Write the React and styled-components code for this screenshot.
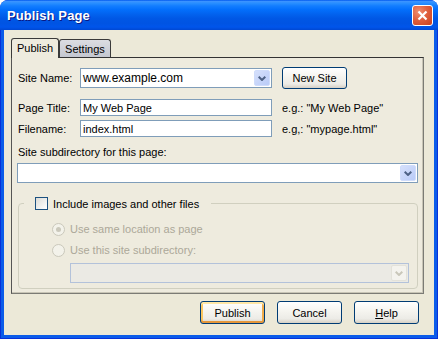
import React from "react";
import styled, { createGlobalStyle, css } from "styled-components";

const GlobalStyle = createGlobalStyle`
  html, body { margin: 0; padding: 0; background: #ffffff; }
  body { font-family: "Liberation Sans", Arial, sans-serif; font-size: 11px; color: #000; }
  * { box-sizing: border-box; }
`;

const Window = styled.div`
  width: 438px;
  height: 339px;
  display: flex;
  flex-direction: column;
  border-radius: 8px 8px 0 0;
  overflow: hidden;
  background: #0831d9;
`;

const TitleBar = styled.div`
  height: 30px;
  flex: none;
  display: flex;
  align-items: center;
  justify-content: space-between;
  padding: 0 5px 0 7px;
  background: linear-gradient(
    to bottom,
    #0058ee 0%,
    #3a93ff 5%,
    #288eff 11%,
    #127dff 20%,
    #036ffc 32%,
    #0262ee 48%,
    #0057e5 62%,
    #0054e3 78%,
    #0055eb 90%,
    #0048d3 100%
  );
`;

const Title = styled.span`
  color: #fff;
  font: bold 13px "Liberation Sans", Arial, sans-serif;
  text-shadow: 1px 1px 0 #0a1883;
  letter-spacing: 0.1px;
`;

const CloseButton = styled.div`
  width: 21px;
  height: 21px;
  border: 1px solid #fff;
  border-radius: 3px;
  display: flex;
  align-items: center;
  justify-content: center;
  background: radial-gradient(circle at 30% 30%, #f08e70 0%, #e0603e 45%, #c9401d 100%);
`;

const Frame = styled.div`
  flex: 1;
  display: flex;
  padding: 0 1px 1px 1px;
  background: #0831d9;
`;

const Client = styled.div`
  flex: 1;
  display: flex;
  flex-direction: column;
  background: #ece9d8;
  border: 3px solid #0b5ce9;
  border-top: none;
  padding: 8px 10px 11px 7px;
`;

const TabStrip = styled.div`
  display: flex;
  align-items: flex-end;
  height: 20px;
  margin-bottom: -1px;
  z-index: 1;
  flex: none;
`;

const Tab = styled.div`
  display: flex;
  align-items: center;
  padding: 0 5px;
  border: 1px solid #3a3a3a;
  border-bottom: none;
  border-radius: 3px 3px 0 0;
  ${(p) =>
    p.$active
      ? css`
          height: 20px;
          background: #eeebde;
          padding-bottom: 2px;
        `
      : css`
          height: 18px;
          margin-bottom: 1px;
          background: linear-gradient(to bottom, #dcdde2 0%, #c4c7d0 100%);
        `}
`;

const Panel = styled.div`
  flex: 1;
  display: flex;
  flex-direction: column;
  background: #eeebde;
  border: 1px solid #7b7b75;
  border-top-color: #333;
  border-left-color: #555;
  box-shadow: inset -1px -1px 0 #c8c5b6;
  padding: 9px 5px 0 5px;
`;

const FieldRow = styled.div`
  display: flex;
  align-items: center;
  height: ${(p) => p.$h}px;
  margin-top: ${(p) => p.$mt || 0}px;
`;

const Label = styled.span`
  width: 63px;
  padding-left: 1px;
  flex: none;
  white-space: nowrap;
`;

const Hint = styled.span`
  margin-left: 10px;
  white-space: nowrap;
`;

const Combo = styled.div`
  width: ${(p) => (p.$w ? `${p.$w}px` : "auto")};
  height: 20px;
  flex: none;
  display: flex;
  align-items: center;
  justify-content: space-between;
  border: 1px solid ${(p) => (p.$disabled ? "#b3c2da" : "#7f9db9")};
  background: ${(p) => (p.$disabled ? "#ebeae4" : "#fff")};
  padding-left: 2px;
  font-size: 12px;
  margin-top: ${(p) => p.$mt || 0}px;
  margin-left: ${(p) => p.$ml || 0}px;
`;

const DropButton = styled.span`
  width: 16px;
  height: 16px;
  margin: 1px;
  display: flex;
  align-items: center;
  justify-content: center;
  border-radius: 2px;
  ${(p) =>
    p.$disabled
      ? css`
          background: #f4f3ee;
          border: 1px solid #e3e2da;
        `
      : css`
          background: linear-gradient(135deg, #d6e0fb 0%, #b9cbf8 100%);
          border: 1px solid #cfdcfb;
        `}
`;

const TextInput = styled.div`
  width: 192px;
  height: 17px;
  flex: none;
  display: flex;
  align-items: center;
  border: 1px solid #7f9db9;
  background: #fff;
  padding-left: 2px;
`;

const Button = styled.button`
  width: 65px;
  height: ${(p) => p.$h || 23}px;
  flex: none;
  margin-left: ${(p) => p.$ml || 0}px;
  border: 1px solid #003c74;
  border-radius: 3px;
  padding: 0;
  color: #000;
  font: 11px "Liberation Sans", Arial, sans-serif;
  background: linear-gradient(to bottom, #ffffff 0%, #f5f4ef 45%, #ecebe6 80%, #d6d0c5 100%);
  ${(p) =>
    p.$default &&
    css`
      box-shadow: inset 0 2px 0 #ffe7a6, inset 0 -2px 0 #e5973c, inset 2px 0 0 #fbc761,
        inset -2px 0 0 #f0ac4a;
    `}
`;

const SubLabel = styled.div`
  margin-top: 9px;
  height: 13px;
  line-height: 13px;
  padding-left: 1px;
`;

const Group = styled.fieldset`
  margin: 14px 0 0 1px;
  padding: 11px 8px 5px 33px;
  border: 1px solid #d0cfbf;
  border-radius: 4px;
  min-width: 0;
  display: flex;
  flex-direction: column;
`;

const Legend = styled.legend`
  margin-left: -28px;
  padding: 0 12px 0 11px;
  height: 13px;
  display: flex;
  align-items: center;
  gap: 5px;
`;

const CheckBox = styled.span`
  width: 13px;
  height: 13px;
  border: 1px solid #1c5180;
  background: linear-gradient(135deg, #dcdcd7 0%, #ffffff 100%);
  flex: none;
`;

const RadioRow = styled.div`
  display: flex;
  align-items: center;
  gap: 5px;
  height: 16px;
  margin-top: ${(p) => p.$mt || 0}px;
  color: #aca899;
`;

const Radio = styled.span`
  width: 13px;
  height: 13px;
  border-radius: 50%;
  border: 1px solid #cac8bb;
  background: #f3f2ea;
  flex: none;
  display: flex;
  align-items: center;
  justify-content: center;
  &::after {
    content: "";
    width: 5px;
    height: 5px;
    border-radius: 50%;
    background: ${(p) => (p.$checked ? "#cac8bb" : "transparent")};
  }
`;

const ButtonRow = styled.div`
  display: flex;
  justify-content: flex-end;
  gap: 12px;
  margin-top: 7px;
  padding-right: 5px;
  flex: none;
`;

const Chevron = ({ color = "#4d6185" }) => (
  <svg width="8" height="5" viewBox="0 0 8 5">
    <path d="M0.7 0.7 L4 4 L7.3 0.7" stroke={color} strokeWidth="2" fill="none" />
  </svg>
);

export default function App() {
  return (
    <>
      <GlobalStyle />
      <Window>
        <TitleBar>
          <Title>Publish Page</Title>
          <CloseButton>
            <svg width="11" height="11" viewBox="0 0 11 11">
              <path d="M1.5 1.5 L9.5 9.5 M9.5 1.5 L1.5 9.5" stroke="#fff" strokeWidth="2.2" />
            </svg>
          </CloseButton>
        </TitleBar>
        <Frame>
          <Client>
            <TabStrip>
              <Tab $active>Publish</Tab>
              <Tab>Settings</Tab>
            </TabStrip>
            <Panel>
              <FieldRow $h={22}>
                <Label>Site Name:</Label>
                <Combo $w={192}>
                  <span>www.example.com</span>
                  <DropButton>
                    <Chevron />
                  </DropButton>
                </Combo>
                <Button $h={22} $ml={10}>
                  New Site
                </Button>
              </FieldRow>
              <FieldRow $h={17} $mt={10}>
                <Label>Page Title:</Label>
                <TextInput>My Web Page</TextInput>
                <Hint>e.g.: "My Web Page"</Hint>
              </FieldRow>
              <FieldRow $h={17} $mt={4}>
                <Label>Filename:</Label>
                <TextInput>index.html</TextInput>
                <Hint>e.g,: "mypage.html"</Hint>
              </FieldRow>
              <SubLabel>Site subdirectory for this page:</SubLabel>
              <Combo $mt={4}>
                <span />
                <DropButton>
                  <Chevron />
                </DropButton>
              </Combo>
              <Group>
                <Legend>
                  <CheckBox />
                  <span>Include images and other files</span>
                </Legend>
                <RadioRow>
                  <Radio $checked />
                  <span>Use same location as page</span>
                </RadioRow>
                <RadioRow $mt={5}>
                  <Radio />
                  <span>Use this site subdirectory:</span>
                </RadioRow>
                <Combo $disabled $mt={5} $ml={18}>
                  <span />
                  <DropButton $disabled>
                    <Chevron color="#c9c7ba" />
                  </DropButton>
                </Combo>
              </Group>
            </Panel>
            <ButtonRow>
              <Button $default>Publish</Button>
              <Button>Cancel</Button>
              <Button>
                <u>H</u>elp
              </Button>
            </ButtonRow>
          </Client>
        </Frame>
      </Window>
    </>
  );
}
